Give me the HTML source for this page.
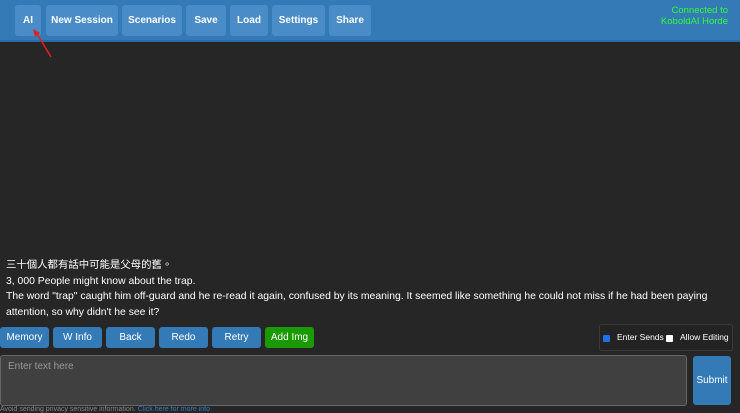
<!DOCTYPE html>
<html><head><meta charset="utf-8"><style>
body{margin:0;width:740px;height:412px;overflow:hidden;background:#262626;font-family:"Liberation Sans","Noto Sans CJK TC",sans-serif;position:relative}
.top{position:absolute;left:0;top:0;width:740px;height:40px;background:#337ab7;border-bottom:2px solid #2a6aa5}
.tb{position:absolute;top:5px;height:31px;background:#4a8cc8;color:#fff;font-weight:bold;font-size:10px;line-height:31px;text-align:center;border-radius:3px}
.conn{position:absolute;right:12px;top:5px;color:#3f3;font-size:9.5px;text-align:right;line-height:11px}
.main{position:absolute;left:0;top:42px;width:734px;height:280px;background:#262626}
.txt{position:absolute;left:6px;top:258px;width:720px;color:#fff;font-size:10.4px;line-height:15.5px}
.bb{position:absolute;top:327px;height:21px;width:49px;background:#337ab7;color:#fff;font-size:10px;line-height:21px;text-align:center;border-radius:3px}
.chk{position:absolute;left:599px;top:324px;width:132px;height:25px;border:1px solid #3a3a3a;border-radius:3px;background:#232323;color:#fff;font-size:8.5px;line-height:25px}
.ta{position:absolute;left:0;top:355px;width:687px;height:51px;background:#404040;border:1px solid #666;border-radius:3px;color:#999;font-size:10px;box-sizing:border-box;padding:5px 7px}
.sub{position:absolute;left:693px;top:356px;width:38px;height:49px;background:#337ab7;color:#fff;font-size:10px;line-height:49px;text-align:center;border-radius:3px}
</style></head><body>
<div class="top">
<div class="tb" style="left:15px;width:26px">AI</div>
<div class="tb" style="left:46px;width:72px">New Session</div>
<div class="tb" style="left:122px;width:60px">Scenarios</div>
<div class="tb" style="left:186px;width:40px">Save</div>
<div class="tb" style="left:230px;width:38px">Load</div>
<div class="tb" style="left:272px;width:53px">Settings</div>
<div class="tb" style="left:329px;width:42px">Share</div>
<div class="conn">Connected to<br>KoboldAI Horde</div>
</div>
<div class="main"></div>
<svg style="position:absolute;left:30px;top:28px;z-index:5" width="25" height="32"><line x1="21" y1="29" x2="6" y2="4" stroke="#e02020" stroke-width="1.5"/><path d="M3 1 L10 5 L5 9 Z" fill="#e02020"/></svg>
<div class="txt">三十個人都有話中可能是父母的舊。<br>3, 000 People might know about the trap.<br>The word "trap" caught him off-guard and he re-read it again, confused by its meaning. It seemed like something he could not miss if he had been paying attention, so why didn't he see it?</div>
<div class="bb" style="left:0">Memory</div>
<div class="bb" style="left:53px">W Info</div>
<div class="bb" style="left:106px">Back</div>
<div class="bb" style="left:159px">Redo</div>
<div class="bb" style="left:212px">Retry</div>
<div class="bb" style="left:265px;background:#1a9a00">Add Img</div>
<div class="chk"><span style="position:absolute;left:3px;top:10px;width:7px;height:7px;background:#1a73e8;border-radius:1px"></span><span style="position:absolute;left:17px">Enter Sends</span><span style="position:absolute;left:66px;top:10px;width:7px;height:7px;background:#fff;border-radius:1px"></span><span style="position:absolute;left:80px">Allow Editing</span></div>
<div class="ta">Enter text here</div>
<div class="sub">Submit</div>
<div style="position:absolute;left:0;top:406px;font-size:7px;color:#888">Avoid sending privacy sensitive information. <span style="color:#3a7fc0">Click here for more info</span></div>
</body></html>
